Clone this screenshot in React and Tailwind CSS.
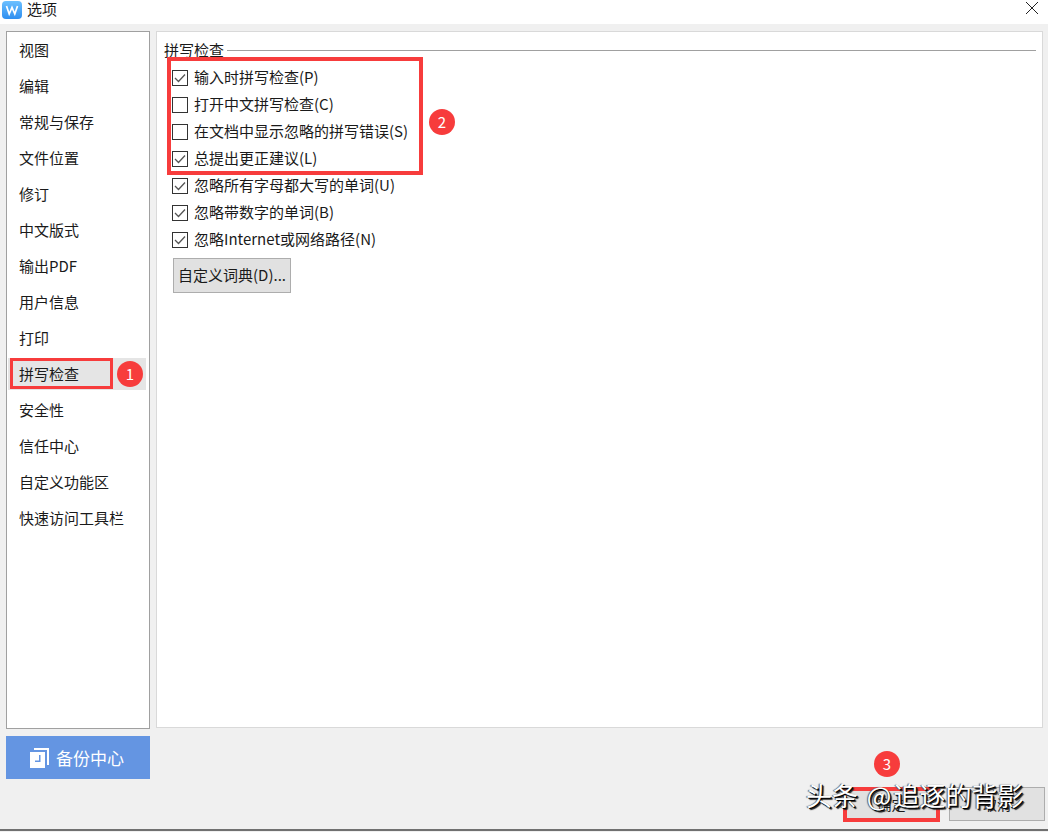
import React from 'react';

const FONT = "font-['Microsoft_YaHei','Noto_Sans_CJK_SC','Noto_Sans',sans-serif]";

const NAV = ['视图', '编辑', '常规与保存', '文件位置', '修订', '中文版式', '输出PDF', '用户信息', '打印', '拼写检查', '安全性', '信任中心', '自定义功能区', '快速访问工具栏'];

const OPTIONS = [
  { label: '输入时拼写检查(P)', checked: true },
  { label: '打开中文拼写检查(C)', checked: false },
  { label: '在文档中显示忽略的拼写错误(S)', checked: false },
  { label: '总提出更正建议(L)', checked: true },
  { label: '忽略所有字母都大写的单词(U)', checked: true },
  { label: '忽略带数字的单词(B)', checked: true },
  { label: '忽略Internet或网络路径(N)', checked: true },
];

const Checkbox = ({ checked }) => (
  <span className="w-4 h-4 border border-[#333333] bg-white flex items-center justify-center shrink-0">
    {checked && (
      <svg width="12" height="10" viewBox="0 0 12 10" fill="none">
        <path d="M1 5l3.5 3.5L11 1.5" stroke="#555555" strokeWidth="1.3" />
      </svg>
    )}
  </span>
);

const Badge = ({ n, className }) => (
  <span className={`absolute w-[26px] h-[26px] rounded-full bg-[#f73c3c] text-white text-[15px] leading-[26px] text-center ${className}`}>{n}</span>
);

export default function App() {
  return (
    <div className={`relative w-[1048px] h-[832px] overflow-hidden bg-[#f0f0f0] text-[15px] text-[#1a1a1a] flex flex-col ${FONT}`}>
      {/* title bar */}
      <div className="h-6 bg-white flex items-start shrink-0 pl-[2px] pr-[9px]">
        <svg width="20" height="18" viewBox="0 0 20 18" className="mt-px">
          <defs>
            <linearGradient id="wps" x1="0" y1="0" x2="0" y2="1">
              <stop offset="0" stopColor="#6cc0ff" />
              <stop offset="1" stopColor="#2f8ff0" />
            </linearGradient>
          </defs>
          <rect width="20" height="18" rx="4" fill="url(#wps)" />
          <path d="M4.5 5l2.7 8 2.8-6.5 2.8 6.5 2.7-8" fill="none" stroke="#fff" strokeWidth="1.7" />
        </svg>
        <span className="ml-[5px] leading-[18px]">选项</span>
        <svg width="14" height="14" viewBox="0 0 14 14" className="ml-auto mt-px">
          <path d="M1 1l12 12M13 1L1 13" stroke="#222" strokeWidth="1" />
        </svg>
      </div>

      <div className="flex gap-[6px] pl-[6px] pr-[5px] pt-[7px] h-[705px] shrink-0">
        {/* sidebar */}
        <div className="w-[144px] h-[698px] border border-[#a0a0a0] bg-white pl-px pr-[3px] pt-[2px] flex flex-col gap-1">
          {NAV.map((item) => (
            <div key={item} className={`h-8 flex items-center pl-[11px] ${item === '拼写检查' ? 'bg-[#e5e5e5]' : ''}`}>
              {item}
            </div>
          ))}
        </div>

        {/* main panel */}
        <div className="flex-1 h-[697px] border border-[#d9d9d9] bg-white pl-[7px] pr-[6px] pt-[8px]">
          <div className="flex items-center h-5">
            <span>拼写检查</span>
            <span className="flex-1 h-px bg-[#a0a0a0] ml-[3px]" />
          </div>
          <div className="pt-[4px] pl-2">
            {OPTIONS.map((o) => (
              <div key={o.label} className="h-[27px] flex items-center gap-[6px]">
                <Checkbox checked={o.checked} />
                <span className="whitespace-nowrap">{o.label}</span>
              </div>
            ))}
            <button className="mt-[5px] ml-px w-[118px] h-[35px] border border-[#adadad] bg-[#e1e1e1] text-[15px]">自定义词典(D)...</button>
          </div>
        </div>
      </div>

      {/* bottom */}
      <div className="flex-1 flex flex-col">
        <div className="flex-1 flex pl-[6px] pr-[3px] pt-[7px]">
          <div className="w-[144px] h-[43px] bg-[#6495e2] text-white text-[17px] flex items-center justify-center gap-[7px] pr-[2px]">
            <svg width="19" height="20" viewBox="0 0 19 20">
              <path d="M4 0h15v17h-2V2H4z" fill="#fff" />
              <path d="M0 4h15v16H0z" fill="#fff" />
              <path d="M9 7h1.5v7H5v-1.5h4z" fill="#6495e2" />
            </svg>
            备份中心
          </div>
          <div className="ml-auto flex gap-[11px] pt-[51px]">
            <button className="w-[93px] h-[34px] border border-[#adadad] bg-[#e1e1e1] text-[14px]">确定</button>
            <button className="w-[96px] h-[34px] border border-[#adadad] bg-[#e1e1e1] text-[14px]">取消</button>
          </div>
        </div>
        <div className="h-[2px] bg-[#707070] mb-px" />
      </div>

      {/* annotations */}
      <div className="absolute left-[10px] top-[358px] w-[103px] h-[31px] border-[3px] border-[#f73c3c]" />
      <div className="absolute left-[167px] top-[57px] w-[256px] h-[118px] border-[4px] border-[#f73c3c]" />
      <div className="absolute left-[843px] top-[787px] w-[97px] h-[35px] border-[4px] border-[#f73c3c]" />
      <Badge n="1" className="left-[117px] top-[361px]" />
      <Badge n="2" className="left-[429px] top-[109px]" />
      <Badge n="3" className="left-[874px] top-[751px]" />

      {/* watermark */}
      <span className="absolute left-[806px] top-[777px] text-[26px] leading-9 text-white whitespace-nowrap [word-spacing:3px] [text-shadow:1px_1px_0_#000,2px_2px_1px_#222,-1px_0_1px_#555]">头条 @<span className="ml-[2px]">追逐的背影</span></span>
    </div>
  );
}
